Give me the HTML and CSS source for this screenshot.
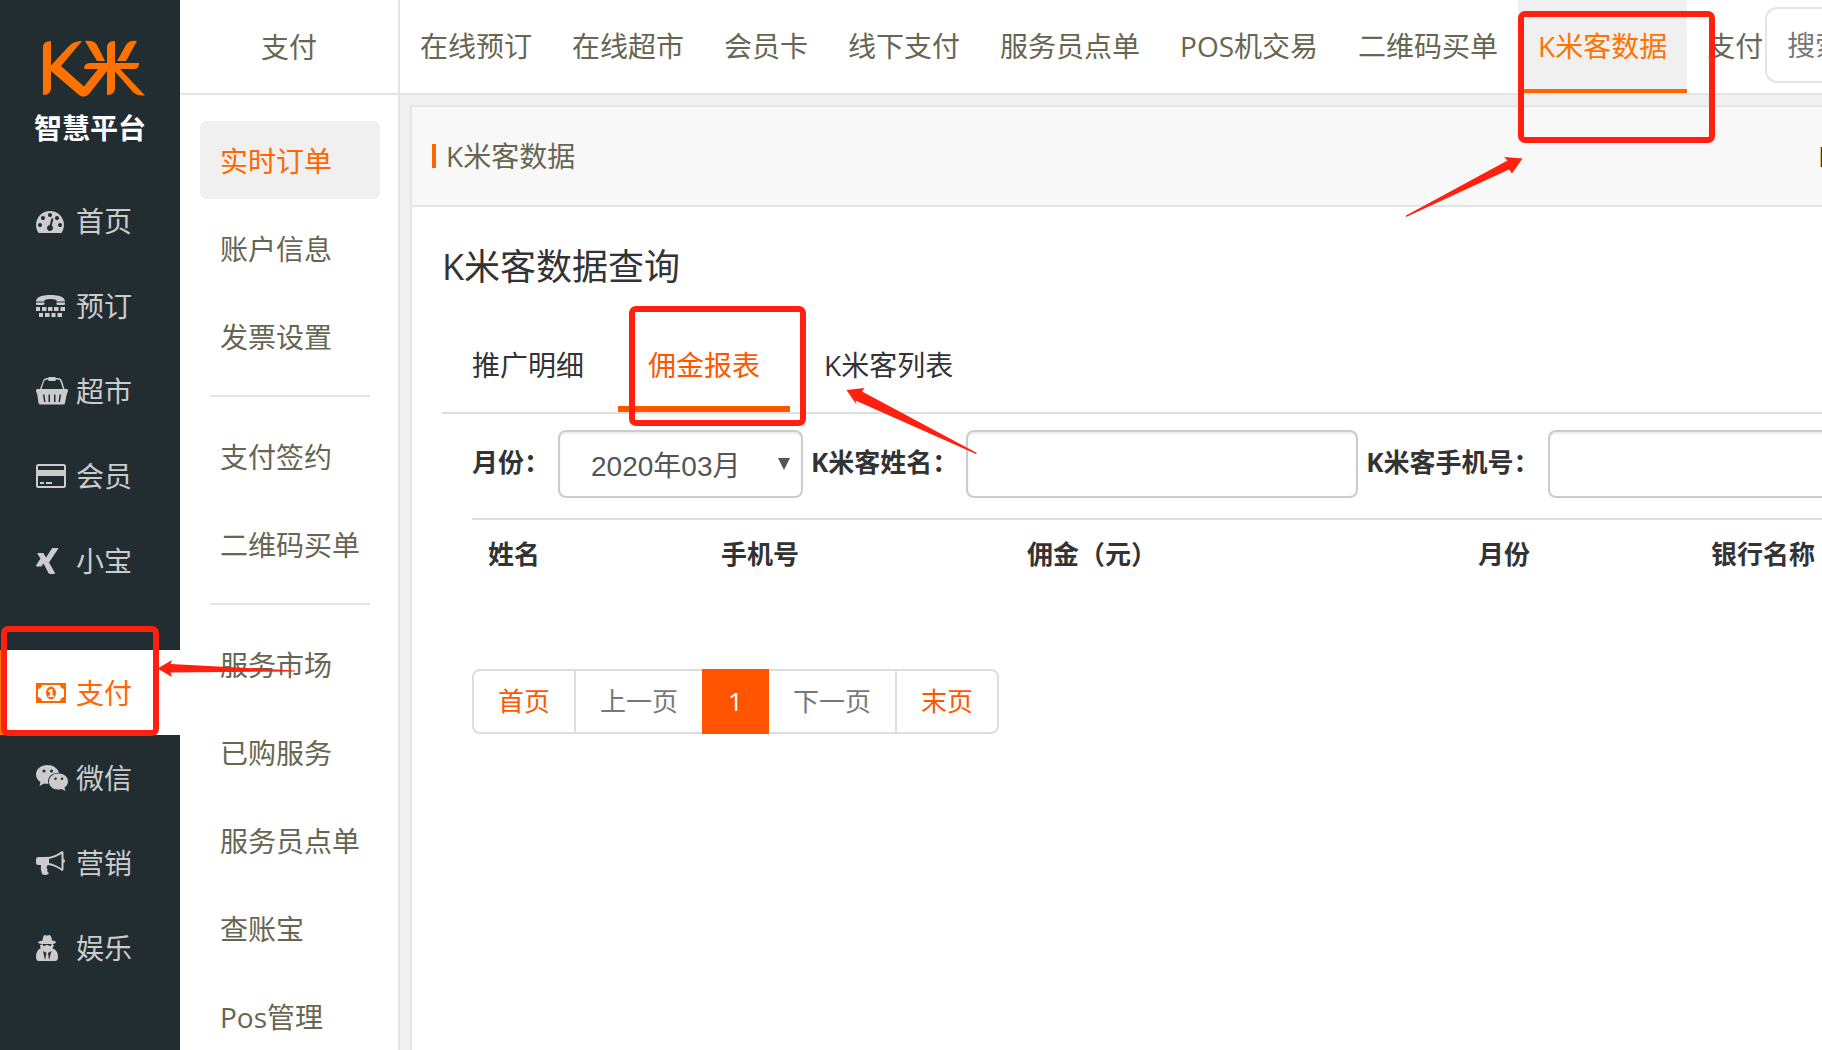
FILE: index.html
```html
<!DOCTYPE html>
<html lang="zh-CN">
<head>
<meta charset="utf-8">
<title>K米智慧平台</title>
<link rel="stylesheet" href="styles.css">
</head>
<body>
<aside class="sidebar">
  <div class="brand">
    <svg class="brand-mark" viewBox="0 0 104 58" aria-hidden="true">
      <path d="M1 7Q1 1 9 1V25.500L27 6Q32 1 40 1L19 26L42 46.500L56 29H42Q42 23 48 23H65V6Q66 1 73 1V23H97Q97 29 92 29H78L103 55.500Q94 56 90 51L73 31.500V49Q72 55 65 55V31L47 54Q42 59 37 55L9 31V49Q8 55 1 55Z"/>
      <path d="M43 1Q52 0 55 5L63 21H55ZM95 1Q87 0 84 5L75 21H84Z"/>
    </svg>
    <span class="brand-name">智慧平台</span>
  </div>
  <nav class="menu">
    <a href="#"><svg viewBox="0 0 2048 1792"><path d="M384 1152q0-53-37.500-90.500t-90.500-37.500-90.500 37.500-37.500 90.500 37.500 90.500 90.500 37.500 90.500-37.500 37.500-90.500zm192-448q0-53-37.500-90.500t-90.500-37.500-90.500 37.500-37.500 90.500 37.500 90.500 90.500 37.500 90.500-37.500 37.500-90.500zm428 481l101-382q6-26-7.500-48.500t-38.500-29.500-48 6.500-30 39.500l-101 382q-60 5-107 43.500t-63 98.500q-20 77 20 146t117 89 146-20 89-117q16-60-6-117t-72-91zm660-33q0-53-37.500-90.500t-90.500-37.500-90.500 37.500-37.500 90.500 37.500 90.500 90.500 37.500 90.500-37.500 37.500-90.500zm-640-640q0-53-37.500-90.500t-90.500-37.500-90.500 37.500-37.500 90.500 37.500 90.500 90.500 37.500 90.500-37.500 37.500-90.500zm448 192q0-53-37.500-90.500t-90.500-37.500-90.500 37.500-37.500 90.500 37.500 90.500 90.500 37.500 90.500-37.500 37.500-90.500zm320 448q0 261-141 483-19 29-54 29h-1402q-35 0-54-29-141-221-141-483 0-182 71-348t191-286 286-191 348-71 348 71 286 191 191 286 71 348z"/></svg>首页</a>
    <a href="#"><svg viewBox="0 0 32 28"><path d="M0 9.500C0 5 6 3 14.500 3S29 5 29 9.500H20.500V8Q14.500 6 8.500 8V9.500ZM0 10.500H8.500V12Q8 13 7 13H1Q0 13 0 12ZM20.500 10.500H29V12Q29 13 28 13H22Q20.500 13 20.500 12ZM0 15H4V19H0ZM6 15H10.500V19H6ZM12 15H16.500V19H12ZM18 15H22.500V19H18ZM24.500 15H29V19H24.500ZM3 21H7V25H3ZM9 21H13.500V25H9ZM15.500 21H19.500V25H15.500ZM21.500 21H26V25H21.500Z"/></svg>预订</a>
    <a href="#"><svg viewBox="0 0 32 28"><path fill-rule="evenodd" d="M1 12H31Q32 12 32 14T31 16L29 26Q29 27.500 27 27.500H5Q3 27.500 2.500 26L1 16Q0 16 0 14T1 12ZM7 17.500L8 25H9.500L8.500 17.500ZM12.500 17.500V25H14V17.500ZM18 17.500V25H19.500V17.500ZM23.500 17.500L22.500 25H24L25 17.500Z"/><path d="M4 12L7 4Q8 1 11 1H12Q12 0 14 0H18Q20 0 20 1H22Q25 1 26 4L28.500 12H27L24.500 4.500Q24 2.500 22 2.500H20Q20 4 18 4H14Q12 4 12 2.500H11Q9 2.500 8 4.500L5.500 12Z"/></svg>超市</a>
    <a href="#"><svg viewBox="0 0 32 28"><path fill-rule="evenodd" d="M2.500 2H27.500Q30 2 30 4.500V23.500Q30 26 27.500 26H2.500Q0 26 0 23.500V4.500Q0 2 2.500 2ZM2 4V8H28V4ZM2 14V24H28V14ZM4 20H8V22H4ZM10 20H16V22H10Z"/></svg>会员</a>
    <a href="#"><svg viewBox="0 0 32 28"><path d="M2 6H6.500Q7.500 6 8 7L10.500 11.500L5.500 19.500H1Q0 19.500 0 18.500L4.500 11.500L1.500 7Q1.500 6 2 6ZM17 1H22Q22.500 1 22 2L13 15.500L19 26Q19 27 18 27H14Q13 27 12.500 26L7.500 16.500Q7 15.500 7.500 14.500L15.500 2Q16 1 17 1Z"/></svg>小宝</a>
    <a href="#" class="active"><svg viewBox="0 0 32 28"><path fill-rule="evenodd" d="M0 4H30V24H0ZM6 6Q5.500 9.500 2 10V18Q5.500 18.500 6 22H24Q24.500 18.500 28 18V10Q24.500 9.500 24 6ZM15 7.500A5 6.500 0 0 1 15 20.500A5 6.500 0 0 1 15 7.500ZM14.500 10L12 12L13 13.500L14 12.500V16.500H12.500V18H18V16.500H16.500V10Z"/></svg>支付</a>
    <a href="#"><svg viewBox="0 0 32 28"><path fill-rule="evenodd" d="M11.500 1C17 1 22 4.500 23 9C17 8.500 12 12 12 17.500L12.500 19.500Q10.500 20 8 19.500L3.500 22L4.500 18C2 16.500 0 14 0 10.500C0 5 5 1 11.500 1ZM8 5.500A1.500 1.500 0 0 0 8 8.500A1.500 1.500 0 0 0 8 5.500ZM15.500 5.500A1.500 1.500 0 0 0 15.500 8.500A1.500 1.500 0 0 0 15.500 5.500Z"/><path fill-rule="evenodd" d="M22.500 9.500C28 9.500 32 13 32 17.500Q32 21 28.500 23.500L29.500 27L25.500 25C18.500 27 13 23 13 17.500C13 13 17 9.500 22.500 9.500ZM19.500 13.500A1.200 1.200 0 0 0 19.500 16A1.200 1.200 0 0 0 19.500 13.500ZM26 13.500A1.200 1.200 0 0 0 26 16A1.200 1.200 0 0 0 26 13.500Z"/></svg>微信</a>
    <a href="#"><svg viewBox="0 0 32 28"><path fill-rule="evenodd" d="M26 2Q27.500 2 27.500 4V10Q29 10.500 29 12T27.500 14V20Q27.500 22 26 22Q20 17 12 16Q9.500 18 11.500 20.500Q10.500 22.500 13 24Q12 26 9.500 26T6 25Q4 20 5 16H2.500Q0 16 0 13.500V10.500Q0 8 2.500 8H10Q18 8 26 2ZM25.500 5Q19 9 13 10V14Q19 15 25.500 19.500Z"/></svg>营销</a>
    <a href="#"><svg viewBox="0 0 32 28"><path fill-rule="evenodd" d="M6.500 6.500Q7 1 9 1Q11 2 13 1Q15.500 1 16 6.500Q20 7 20 8.500Q19 9.500 17 10V11H18L16.500 14.500Q22 16 22 23Q22 27 19 27H3Q0 27 0 23Q0 16 4.500 14.500L4 11H5.500V10Q2 9.500 2 8Q3 7 6.500 6.500ZM6.500 10V11Q8 13 10 11H12Q14 13 15.500 11V10ZM7 17L9 26L10.500 19ZM15.500 17L12 19L13 26Z"/></svg>娱乐</a>
  </nav>
</aside>
<section class="subnav">
  <h2>支付</h2>
  <nav>
    <a href="#" class="active">实时订单</a>
    <a href="#">账户信息</a>
    <a href="#">发票设置</a>
    <hr>
    <a href="#">支付签约</a>
    <a href="#">二维码买单</a>
    <hr>
    <a href="#">服务市场</a>
    <a href="#">已购服务</a>
    <a href="#">服务员点单</a>
    <a href="#">查账宝</a>
    <a href="#">Pos管理</a>
  </nav>
</section>
<main class="main">
  <header class="topbar">
    <nav>
      <a href="#">在线预订</a>
      <a href="#">在线超市</a>
      <a href="#">会员卡</a>
      <a href="#">线下支付</a>
      <a href="#">服务员点单</a>
      <a href="#">POS机交易</a>
      <a href="#">二维码买单</a>
      <a href="#" class="active">K米客数据</a>
      <a href="#">支付</a>
    </nav>
    <input type="search" placeholder="搜索" aria-label="搜索">
  </header>
  <section class="panel">
    <header class="panel-head">
      <h1>K米客数据</h1>
      <a href="#">K</a>
    </header>
    <div class="panel-body">
      <h2>K米客数据查询</h2>
      <nav class="tabs">
        <a href="#">推广明细</a>
        <a href="#" class="active">佣金报表</a>
        <a href="#">K米客列表</a>
      </nav>
      <div class="report">
        <form class="filters">
          <label for="month">月份：</label>
          <span class="select"><select id="month"><option>2020年03月</option></select></span>
          <label for="name">K米客姓名：</label>
          <input id="name" type="text">
          <label for="phone">K米客手机号：</label>
          <input id="phone" type="tel">
        </form>
        <table>
          <thead>
            <tr><th class="c-name">姓名</th><th class="c-phone">手机号</th><th class="c-sum">佣金（元）</th><th class="c-month">月份</th><th>银行名称</th></tr>
          </thead>
        </table>
        <nav class="pager">
          <a href="#">首页</a>
          <a class="off">上一页</a>
          <a href="#" class="current">1</a>
          <a class="off">下一页</a>
          <a href="#">末页</a>
        </nav>
      </div>
    </div>
  </section>
</main>
<svg class="marks" aria-hidden="true">
  <g class="boxes">
    <rect x="1521" y="14" width="191" height="126" rx="4"/>
    <rect x="632" y="309" width="171" height="114" rx="4"/>
    <rect x="4" y="629" width="152" height="104" rx="4"/>
  </g>
  <path d="M1522.500 158.500L1504 157L1507.500 160.500L1406 215.500V217L1509 169.500L1512 173.500Z"/>
  <path d="M846.500 390L864.500 388L862 391.500L977 453L976 454L855.500 400.500L856.500 404.500Z"/>
  <path d="M157.500 668.500L172 660L170.500 664L295 670.500V671.500L170.500 672.500L172 677Z"/>
</svg>
</body>
</html>
```

FILE: styles.css
```css
* { box-sizing: border-box; }
body {
  margin: 0;
  display: flex;
  height: 100vh;
  overflow: hidden;
  background: #f0f0f0;
  color: #333;
  font: 28px/40px "Open Sans", "Noto Sans CJK SC", sans-serif;
}
a { color: inherit; text-decoration: none; }
h1, h2 { margin: 0; font-weight: 400; }

.sidebar { flex: none; width: 180px; background: #222d32; }
.brand {
  display: flex;
  flex-direction: column;
  align-items: center;
  gap: 10px;
  height: 178px;
  padding-top: 40px;
}
.brand-mark { width: 104px; height: 58px; margin-left: 8px; fill: #ff7200; }
.brand-name { color: #fff; font-weight: 700; }
.menu a {
  display: flex;
  align-items: center;
  gap: 8px;
  height: 85px;
  padding-left: 36px;
  color: #ccc;
}
.menu svg { width: 32px; height: 28px; fill: currentColor; }
.menu .active {
  margin-top: 47px;
  background: #fff;
  box-shadow: inset 4px 0 #ff7200;
  color: #ff6600;
}

.subnav {
  flex: none;
  width: 220px;
  border-right: 2px solid #e4e4e4;
  background: #fff;
  color: #666652;
}
.subnav h2 {
  height: 95px;
  border-bottom: 2px solid #e4e4e4;
  font-size: 28px;
  line-height: 94px;
  text-align: center;
}
.subnav nav {
  display: flex;
  flex-direction: column;
  gap: 10px;
  padding: 26px 18px 0 20px;
}
.subnav a {
  flex: none;
  height: 78px;
  padding-left: 20px;
  border-radius: 6px;
  line-height: 80px;
  white-space: nowrap;
}
.subnav .active { background: #f0f0f0; color: #ff6600; }
.subnav hr {
  flex: none;
  height: 2px;
  margin: 10px;
  border: 0;
  background: #e4e4e4;
}

.main { flex: 1; min-width: 0; display: flex; flex-direction: column; }
.topbar {
  flex: none;
  display: flex;
  align-items: center;
  height: 95px;
  border-bottom: 2px solid #e4e4e4;
  background: #fff;
  color: #666652;
  overflow: hidden;
}
.topbar nav { flex: none; display: flex; }
.topbar a { height: 93px; padding: 0 20px; line-height: 93px; white-space: nowrap; }
.topbar a:last-child { padding-right: 0; }
.topbar .active {
  border-bottom: 4px solid #ff6600;
  background: #f0f0f0;
  color: #ff7200;
}
.topbar input {
  flex: none;
  width: 320px;
  height: 76px;
  margin: 0 0 4px 2px;
  padding: 0 20px;
  border: 2px solid #e4e4e4;
  border-radius: 12px;
  font: inherit;
}
.topbar input::placeholder { color: #777; }

.panel {
  flex: 1;
  margin: 10px 0 0 10px;
  border: solid #e4e4e4;
  border-width: 2px 0 0 2px;
  background: #fff;
  overflow: hidden;
}
.panel-head {
  display: flex;
  align-items: center;
  justify-content: space-between;
  height: 100px;
  padding-left: 20px;
  border-bottom: 2px solid #e4e4e4;
  background: #f8f8f8;
}
.panel-head h1 {
  display: flex;
  align-items: center;
  gap: 10px;
  color: #666652;
  font-size: 28px;
}
.panel-head h1::before { content: ""; width: 4px; height: 24px; background: #ff6600; }
.panel-head a { width: 4px; }
.panel-body { padding-left: 30px; }
.panel-body h2 { padding-top: 34px; font-size: 36px; line-height: 52px; }
.tabs {
  display: flex;
  gap: 4px;
  margin-top: 22px;
  border-bottom: 2px solid #ddd;
}
.tabs a { height: 97px; padding: 30px 30px 0; }
.tabs .active { border-bottom: 6px solid #ff5500; color: #ff5500; }

.report { padding-left: 30px; font-size: 26px; }
.filters { display: flex; align-items: center; gap: 8px; padding: 16px 0 20px; }
.filters > * { flex: none; }
.filters label { padding-bottom: 4px; font-weight: 700; }
.filters input, .filters select {
  height: 68px;
  border: 2px solid #ccc;
  border-radius: 8px;
  background: #fff;
  box-shadow: inset 0 2px 2px #00000013;
  color: #555;
  font: 28px/40px "Liberation Sans", "Noto Sans CJK SC", sans-serif;
}
.filters input { width: 392px; padding: 0 24px; }
.select { position: relative; }
.select select { display: block; width: 245px; padding: 6px 0 0 31px; appearance: none; }
.select::after {
  content: "";
  position: absolute;
  right: 13px;
  top: 28px;
  border: solid transparent;
  border-width: 12px 6px 0;
  border-top-color: #555;
  pointer-events: none;
}

table {
  width: 100%;
  table-layout: fixed;
  border-collapse: collapse;
  border-top: 2px solid #ddd;
}
th { padding: 16px; line-height: 36px; text-align: left; white-space: nowrap; }
.c-name { width: 233px; }
.c-phone { width: 306px; }
.c-sum { width: 451px; }
.c-month { width: 233px; }

.pager { display: flex; margin-top: 81px; }
.pager a {
  height: 65px;
  margin-left: -2px;
  padding: 0 24px;
  border: 2px solid #ddd;
  color: #ff5500;
  line-height: 60px;
}
.pager a:first-child { margin-left: 0; border-radius: 8px 0 0 8px; }
.pager a:last-child { border-radius: 0 8px 8px 0; }
.pager .off { color: #777; }
.pager .current { z-index: 1; border-color: #ff5500; background: #ff5500; color: #fff; }

.marks {
  position: absolute;
  inset: 0;
  width: 100%;
  height: 100%;
  z-index: 2;
  fill: #ff2010;
  pointer-events: none;
}
.boxes { fill: none; stroke: #ff2010; stroke-width: 6px; }
```
